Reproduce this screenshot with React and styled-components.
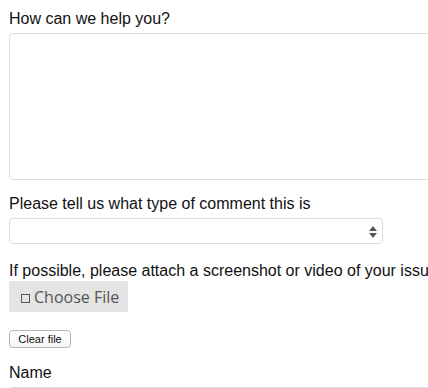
import React from 'react';
import styled, {createGlobalStyle} from 'styled-components';

const Global = createGlobalStyle`
  html, body {
    margin: 0;
    padding: 0;
    background: #fff;
    overflow: hidden;
  }
  body {
    font-family: "Liberation Sans", Arial, sans-serif;
    color: #111;
  }
`;

const Form = styled.form`
  display: flex;
  flex-direction: column;
  align-items: flex-start;
  padding: 10px 0 0 9px;
  width: 428px;
  box-sizing: border-box;
`;

const Label = styled.label`
  display: block;
  font-size: 16px;
  line-height: 18px;
  height: 18px;
  white-space: nowrap;
  margin-top: ${p => p.$top ?? 0}px;
  margin-bottom: ${p => p.$bottom ?? 5}px;
`;

const TextArea = styled.textarea`
  box-sizing: border-box;
  width: 440px;
  height: 147px;
  border: 1px solid #dcdcdc;
  border-radius: 4px;
  resize: none;
  outline: none;
  margin: 0;
`;

const SelectBox = styled.div`
  position: relative;
  box-sizing: border-box;
  width: 374px;
  height: 26px;
  border: 1px solid #dcdcdc;
  border-radius: 4px;
  background: #fff;
`;

const Arrows = styled.svg`
  position: absolute;
  right: 5px;
  top: 7px;
`;

const ChooseButton = styled.button`
  box-sizing: border-box;
  height: 31px;
  width: 119px;
  margin-top: 1px;
  border: none;
  border-radius: 2px;
  background: #e4e4e4;
  color: #555;
  font-family: "Open Sans", "Liberation Sans", sans-serif;
  font-size: 16px;
  padding: 0 0 0 12px;
  text-align: left;
  display: flex;
  align-items: center;
  gap: 4px;
`;

const Box = styled.span`
  display: inline-block;
  width: 7px;
  height: 7px;
  border: 1px solid #555;
  margin-top: 3px;
`;

const ClearButton = styled.button`
  box-sizing: border-box;
  height: 18px;
  width: 62px;
  margin-top: 18px;
  padding: 0;
  border: 1px solid #b5b5b5;
  border-radius: 4px;
  background: linear-gradient(#fff, #f6f6f6);
  font-family: "Liberation Sans", Arial, sans-serif;
  font-size: 11px;
  color: #111;
`;

const NameInput = styled.input`
  box-sizing: border-box;
  width: 440px;
  height: 30px;
  border: 1px solid #dcdcdc;
  border-radius: 4px;
  margin: 0;
`;

export default function App() {
  return (
    <>
      <Global />
      <Form>
        <Label>How can we help you?</Label>
        <TextArea />
        <Label $top={15}>Please tell us what type of comment this is</Label>
        <SelectBox>
          <Arrows width="8" height="12" viewBox="0 0 8 12">
            <path d="M4 0 L8 5 L0 5 Z" fill="#555" />
            <path d="M0 7 L8 7 L4 12 Z" fill="#555" />
          </Arrows>
        </SelectBox>
        <Label $top={18} $bottom={0}>
          If possible, please attach a screenshot or video of your issue
        </Label>
        <ChooseButton type="button">
          <Box />
          Choose File
        </ChooseButton>
        <ClearButton type="button">Clear file</ClearButton>
        <Label $top={16}>Name</Label>
        <NameInput />
      </Form>
    </>
  );
}
